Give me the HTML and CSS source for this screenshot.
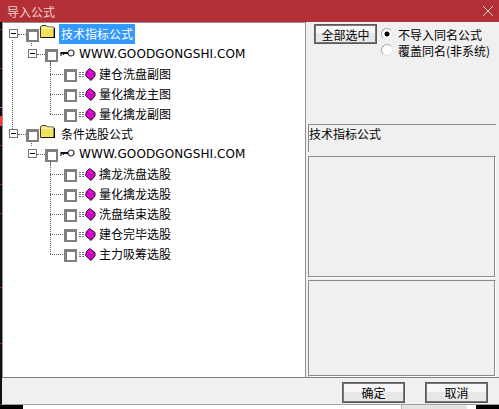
FILE: index.html
```html
<!DOCTYPE html>
<html lang="zh">
<head>
<meta charset="utf-8">
<title>导入公式</title>
<link rel="stylesheet" href="styles.css">
</head>
<body>
<svg width="0" height="0" class="defs">
  <defs>
    <symbol id="folder" viewBox="0 0 15 13">
      <path d="M0.5 12.5V2L2 .5H6L7.5 2H13.5L14 3V12.5Z" fill="#f4e25c" stroke="#3a3a20" stroke-width="1"/>
      <path d="M1 3H13.5" stroke="#fff" stroke-width="1"/>
      <path d="M1.5 12.8H15M14.5 3V13" stroke="#000" stroke-width="1"/>
    </symbol>
    <symbol id="key" viewBox="0 0 15 9">
      <circle cx="11" cy="4" r="3" fill="#fff" stroke="#333" stroke-width="1.2"/>
      <path d="M8 4H.5" stroke="#111" stroke-width="2" fill="none"/>
      <path d="M1 4V7M3.5 4V6" stroke="#222" stroke-width="1.2" fill="none"/>
    </symbol>
    <symbol id="leaf" viewBox="0 0 17 13">
      <path d="M0 4.5H6M0 6.5H6M0 8.5H6" stroke="#777" stroke-width="1" stroke-dasharray="2 1"/>
      <path d="M10.5 .5L16 4.5L16 8L12 12.5L6.5 7.5L7.5 3.5Z" fill="#ee00dd" stroke="#111" stroke-width="1"/>
      <path d="M7.5 3.5L12 7L16 4.5M12 7V12" stroke="#700070" stroke-width=".7" fill="none"/>
    </symbol>
  </defs>
</svg>
<div class="window">
  <header class="titlebar">
    <span class="title">导入公式</span>
    <svg class="close" width="10" height="10" viewBox="0 0 10 10"><path d="M0 0L10 10M10 0L0 10" stroke="#eecfd0" stroke-width="1"/></svg>
  </header>
  <div class="body">
    <div class="tree">
      <div class="row lv1 has-down"><span class="exp"></span><span class="chk"></span><svg class="ic-folder"><use href="#folder"/></svg><span class="label selected">技术指标公式</span></div>
      <div class="row lv2 has-kids"><span class="exp"></span><span class="chk"></span><svg class="ic-key"><use href="#key"/></svg><span class="label latin">WWW.GOODGONGSHI.COM</span></div>
      <div class="row lv3"><span class="chk"></span><svg class="ic-leaf"><use href="#leaf"/></svg><span class="label">建仓洗盘副图</span></div>
      <div class="row lv3"><span class="chk"></span><svg class="ic-leaf"><use href="#leaf"/></svg><span class="label">量化擒龙主图</span></div>
      <div class="row lv3 last"><span class="chk"></span><svg class="ic-leaf"><use href="#leaf"/></svg><span class="label">量化擒龙副图</span></div>
      <div class="row lv1 second"><span class="exp"></span><span class="chk"></span><svg class="ic-folder"><use href="#folder"/></svg><span class="label">条件选股公式</span></div>
      <div class="row lv2 has-kids"><span class="exp"></span><span class="chk"></span><svg class="ic-key"><use href="#key"/></svg><span class="label latin">WWW.GOODGONGSHI.COM</span></div>
      <div class="row lv3"><span class="chk"></span><svg class="ic-leaf"><use href="#leaf"/></svg><span class="label">擒龙洗盘选股</span></div>
      <div class="row lv3"><span class="chk"></span><svg class="ic-leaf"><use href="#leaf"/></svg><span class="label">量化擒龙选股</span></div>
      <div class="row lv3"><span class="chk"></span><svg class="ic-leaf"><use href="#leaf"/></svg><span class="label">洗盘结束选股</span></div>
      <div class="row lv3"><span class="chk"></span><svg class="ic-leaf"><use href="#leaf"/></svg><span class="label">建仓完毕选股</span></div>
      <div class="row lv3 last"><span class="chk"></span><svg class="ic-leaf"><use href="#leaf"/></svg><span class="label">主力吸筹选股</span></div>
    </div>
    <aside class="side">
      <div class="top-controls">
        <button class="btn select-all">全部选中</button>
        <div class="radios">
          <div class="radio-row"><span class="radio on"></span><span>不导入同名公式</span></div>
          <div class="radio-row"><span class="radio"></span><span>覆盖同名(非系统)</span></div>
        </div>
      </div>
      <div class="panel name-panel">技术指标公式</div>
      <div class="panel mid-panel"></div>
      <div class="panel low-panel"></div>
    </aside>
  </div>
  <footer class="actions">
    <button class="btn action">确定</button>
    <button class="btn action">取消</button>
  </footer>
</div>
<div class="behind">
  <span class="b-black"></span>
  <span class="b-gap"></span>
  <span class="b-tab"></span>
  <span class="b-black-r"></span>
</div>
</body>
</html>
```
FILE: styles.css
```css
* { box-sizing: border-box; }
html, body { margin: 0; padding: 0; }
body {
  width: 499px;
  height: 409px;
  overflow: hidden;
  background: #fff;
  font-family: "Noto Sans CJK SC", "Liberation Sans", sans-serif;
  font-size: 12px;
  color: #000;
  position: relative;
}
.defs { position: absolute; }
.window {
  height: 405px;
  background: #f0f0f0;
  border-bottom: 1px solid #a0a0a0;
  border-left: 2px solid #111;
  display: flex;
  flex-direction: column;
  position: relative;
}
/* chart colours showing through the strip left of the dialog */
.window::before {
  content: "";
  position: absolute;
  left: -2px;
  top: 22px;
  width: 2px;
  height: 382px;
  background:
    linear-gradient(#ff3b3b, #ff3b3b) 0 94px / 2px 10px no-repeat,
    linear-gradient(#d040e0, #d040e0) 0 85px / 2px 1px no-repeat,
    linear-gradient(#a02020, #a02020) 0 7px / 2px 1px no-repeat,
    linear-gradient(#a02020, #a02020) 0 46px / 2px 1px no-repeat,
    linear-gradient(#a02020, #a02020) 0 123px / 2px 1px no-repeat,
    linear-gradient(#a02020, #a02020) 0 162px / 2px 1px no-repeat,
    linear-gradient(#a02020, #a02020) 0 191px / 2px 1px no-repeat,
    linear-gradient(#a02020, #a02020) 0 265px / 2px 1px no-repeat,
    linear-gradient(#a02020, #a02020) 0 321px / 2px 1px no-repeat;
}
.titlebar {
  height: 22px;
  margin-left: -2px;
  background: #b12f35;
  color: #f0d2d2;
  display: flex;
  align-items: center;
  justify-content: space-between;
  padding: 0 6px 0 7px;
  font-size: 12px;
  flex: none;
}
.close { display: block; }
.body {
  height: 356px;
  display: flex;
  flex: none;
  border-bottom: 1px solid #808080;
}
.tree {
  width: 304px;
  background: #fff;
  border-left: 1px solid #909090;
  border-right: 1px solid #909090;
  border-top: 1px solid #909090;
  padding-top: 1px;
  flex: none;
  position: relative;
}
.row {
  height: 20px;
  display: flex;
  align-items: center;
  position: relative;
  white-space: nowrap;
}
.lv1 { padding-left: 6px; }
.lv2 { padding-left: 25px; z-index: 1; }
.lv3 { padding-left: 61px; }
.exp {
  width: 9px;
  height: 9px;
  border: 1px solid #777;
  background: linear-gradient(#000, #000) center / 5px 1px no-repeat #fff;
  margin-top: -1px;
  flex: none;
}
.chk {
  width: 13px;
  height: 13px;
  border: solid #808080;
  border-width: 3px 2px 2px 3px;
  background: #fff;
  margin-left: 8px;
  margin-top: 3px;
  flex: none;
}
.lv3 .chk { margin-left: 0; }
.ic-folder { width: 15px; height: 13px; margin-left: 1px; margin-top: -5px; flex: none; }
.ic-key { width: 15px; height: 9px; margin-left: 2px; margin-top: -2px; flex: none; }
.ic-leaf { width: 17px; height: 13px; margin-left: 2px; flex: none; }
.label { margin-left: 3px; line-height: 20px; height: 20px; }
.lv1 .label { padding: 0 2px; margin-left: 4px; }
.lv2 .label { margin-left: 4px; }
.selected { background: #3399ff; color: #fff; }
.latin { font-family: "DejaVu Sans", sans-serif; font-size: 12px; letter-spacing: .1px; }

/* tree connector lines */
.row::before, .row::after { content: ""; position: absolute; }
.lv1::after { left: 15px; top: 10px; width: 8px; border-top: 1px dotted #666; }
.lv2::after { left: 34px; top: 10px; width: 8px; border-top: 1px dotted #666; }
.lv3::after { left: 47px; top: 10px; width: 13px; border-top: 1px dotted #666; }
.lv3::before { left: 47px; top: -10px; height: 20px; border-left: 1px dotted #666; }
.has-kids::before { left: 47px; top: 17px; height: 4px; border-left: 1px dotted #666; }
.has-down::before, .second::before { left: 28px; top: 17px; height: 5px; border-left: 1px dotted #666; }
.tree::before {
  content: "";
  position: absolute;
  left: 9px;
  top: 17px;
  height: 97px;
  border-left: 1px dotted #666;
}

.side {
  flex: 1;
  display: flex;
  flex-direction: column;
  padding-left: 2px;
  padding-right: 3px;
}
.top-controls {
  height: 102px;
  display: flex;
  padding: 2px 0 0 6px;
  flex: none;
}
.btn {
  font: inherit;
  color: #000;
  border: 1px solid #5a5a5a;
  outline: 1px solid #777;
  outline-offset: -2px;
  background: linear-gradient(#f7f7f7 0 45%, #e8e8e8 45% 100%);
  padding: 0;
}
.select-all { width: 63px; height: 20px; }
.radios { margin-left: 4px; padding-top: 2px; }
.radio-row { display: flex; align-items: center; height: 16px; white-space: nowrap; }
.radio-row span:last-child { margin-left: 5px; }
.radio {
  width: 12px;
  height: 12px;
  border-radius: 50%;
  background: #fff;
  border: 1px solid #a8a8a8;
  border-right-color: #e8e8e8;
  border-bottom-color: #e8e8e8;
  flex: none;
}
.radio.on { background: radial-gradient(circle, #000 0 2.2px, #fff 2.8px); }
.panel {
  border: 1px solid #8a8a8a;
  border-bottom-color: #fff;
  border-right-color: #fff;
  box-shadow: inset -1px -1px 0 #8a8a8a;
  flex: none;
}
.name-panel {
  height: 28px;
  border-bottom: 0;
  border-right: 0;
  box-shadow: none;
  line-height: 18px;
}
.mid-panel { height: 122px; margin-top: 4px; }
.low-panel { height: 97px; margin-top: 2px; }
.actions {
  flex: 1;
  display: flex;
  justify-content: flex-end;
  gap: 20px;
  padding: 4px 11px 0 0;
  align-items: flex-start;
}
.action { width: 63px; height: 21px; }

.behind { height: 4px; display: flex; }
.b-black { width: 25px; background: #000; border-right: 2px solid #fff; flex: none; }
.b-gap { width: 377px; flex: none; border-right: 1px solid #bbb; }
.b-tab { width: 65px; background: #e4e4e0; flex: none; }
.b-black-r { flex: 1; margin-left: 9px; background: #000; }
```
